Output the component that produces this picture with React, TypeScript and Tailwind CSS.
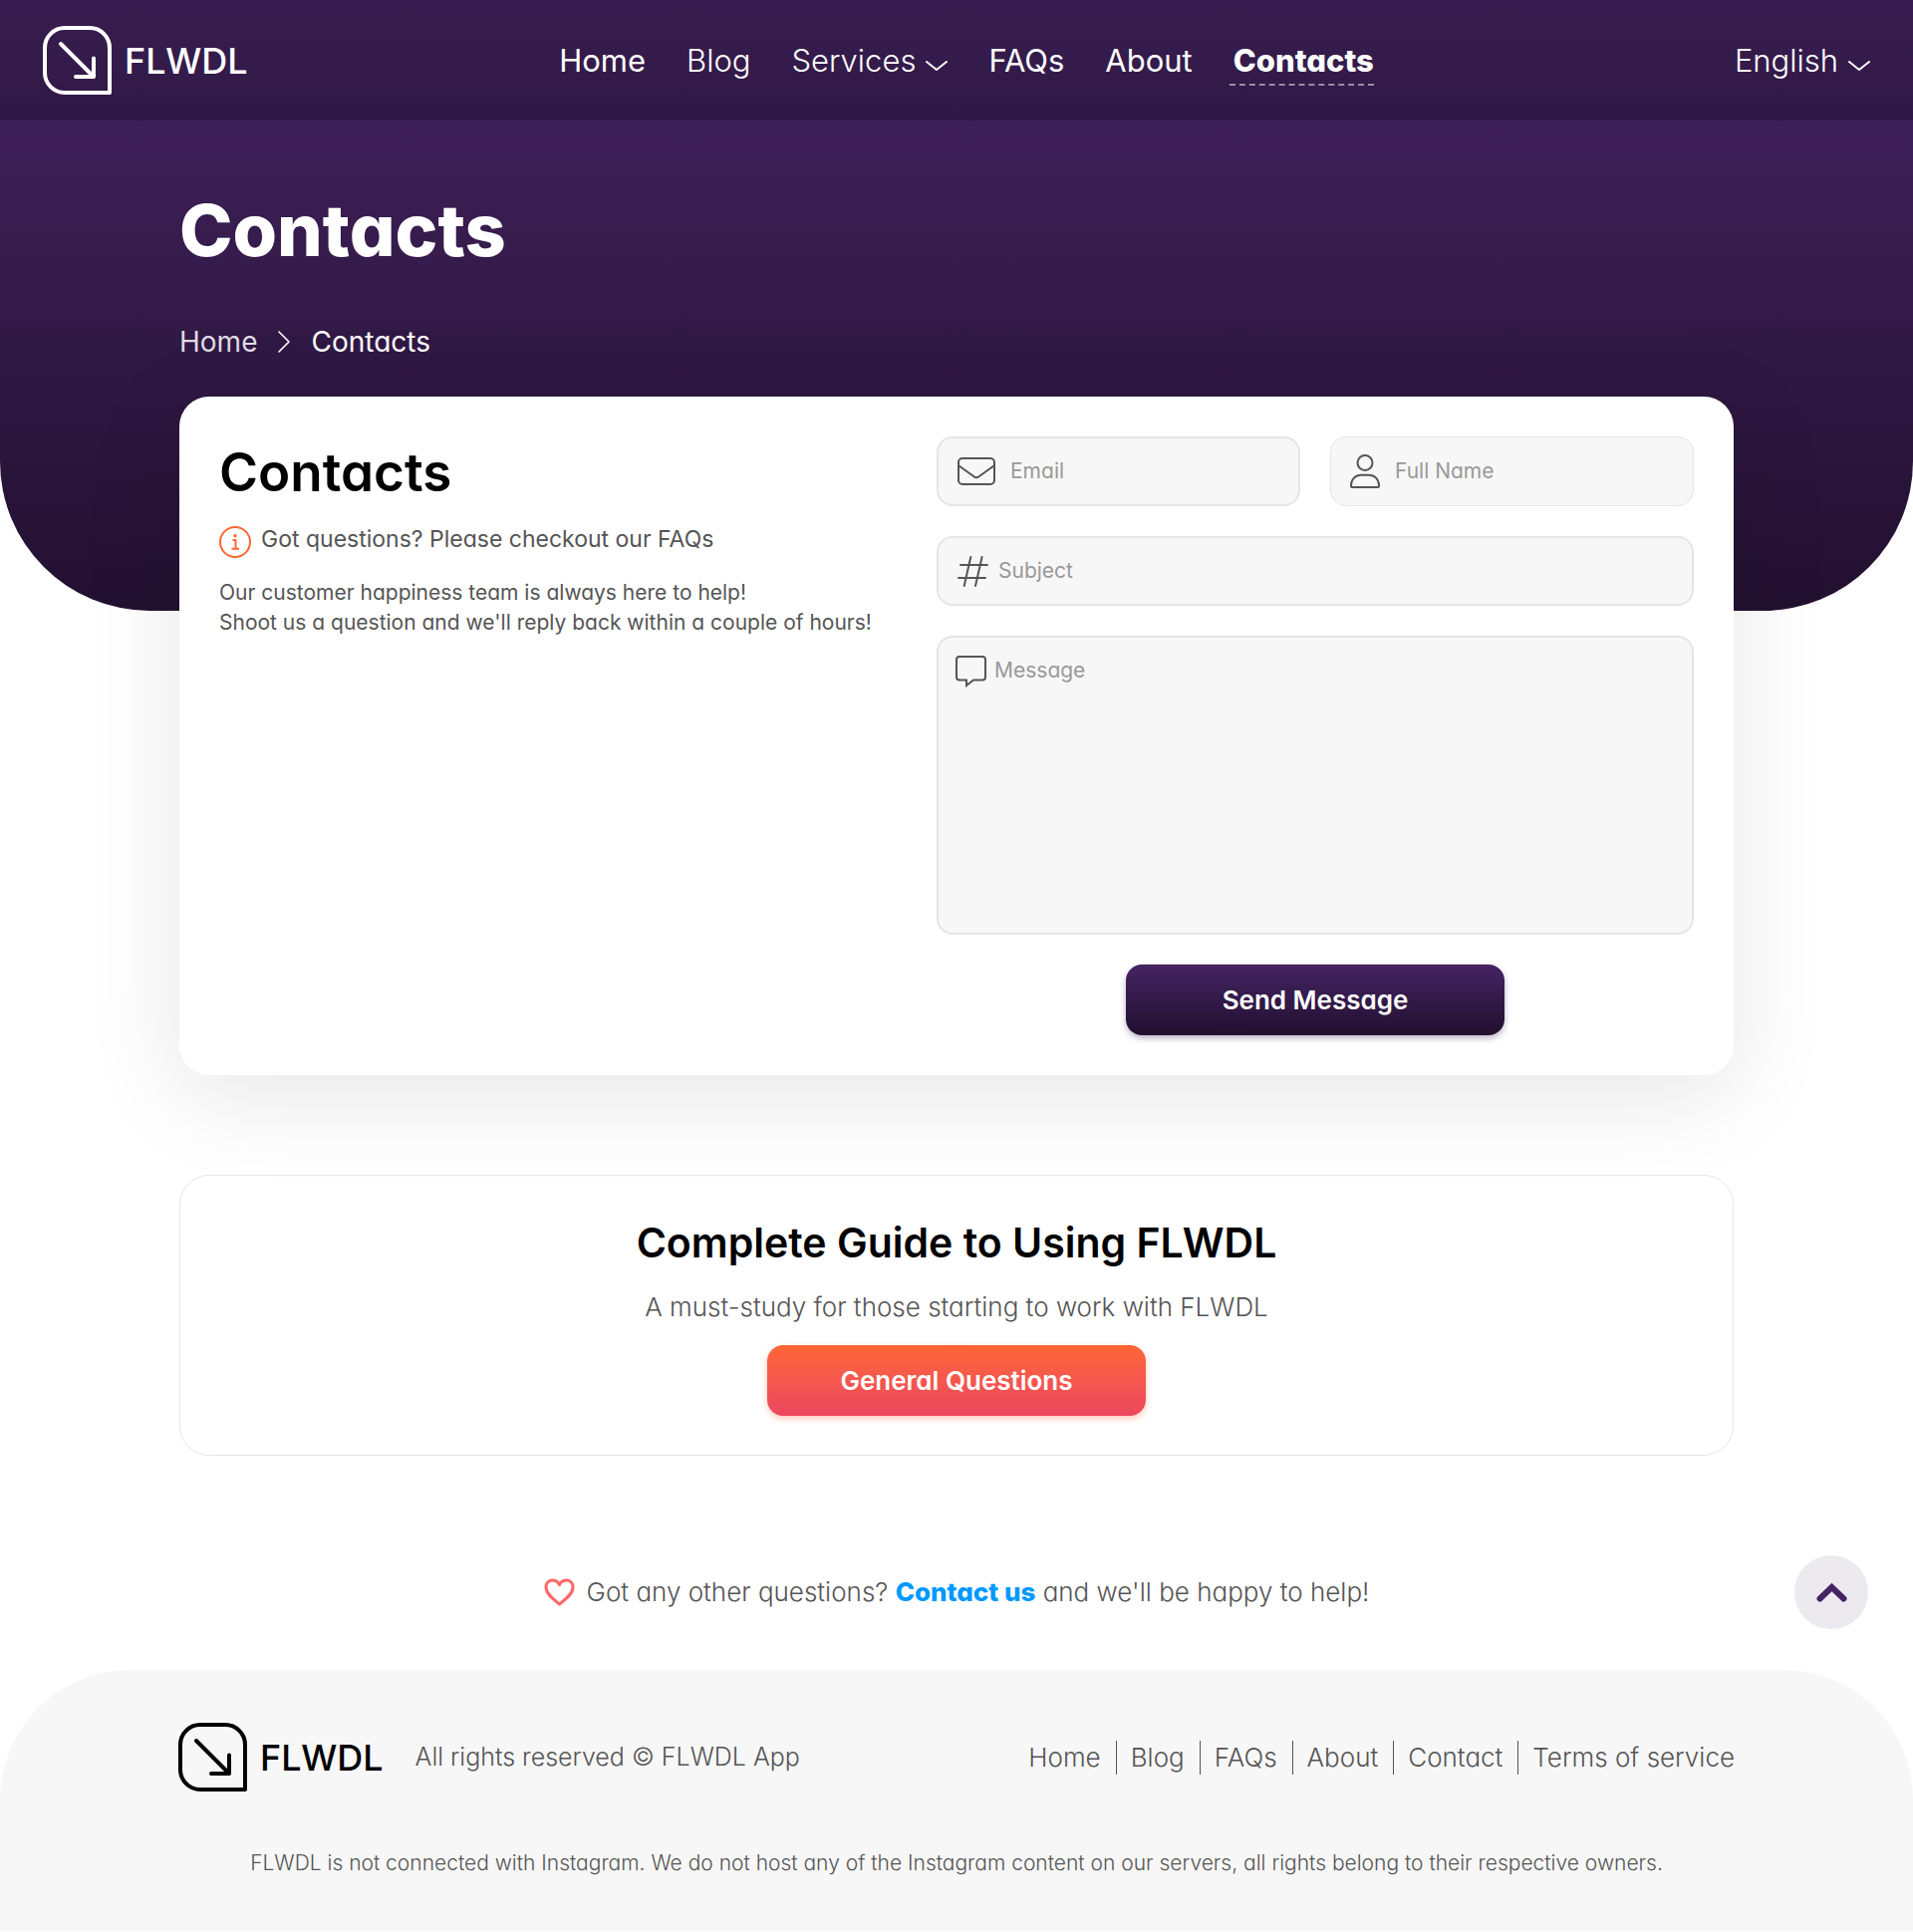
import React from "react";

function Logo({ className }: { className: string }) {
  return (
    <a href="#" className={`flex items-center gap-[13px] text-[36px] font-medium ${className}`}>
      <svg width="69" height="69" viewBox="0 0 69 69" fill="none" stroke="currentColor" strokeWidth="4">
        <path d="M22 2H47A20 20 0 0 1 67 22V67H22A20 20 0 0 1 2 47V22A20 20 0 0 1 22 2Z" strokeLinejoin="round" />
        <path d="M18 18L50.5 50.5M51 32.5V51H33" strokeLinecap="round" strokeLinejoin="round" />
      </svg>
      <span>FLWDL</span>
    </a>
  );
}

function ChevronDown() {
  return (
    <svg className="mt-2.5" width="22" height="10" viewBox="0 0 22 10" fill="none" stroke="currentColor" strokeWidth="2" strokeLinecap="round" strokeLinejoin="round">
      <path d="M1 1L11 9L21 1" />
    </svg>
  );
}

function EnvelopeIcon() {
  return (
    <svg className="shrink-0" width="38" height="28" viewBox="0 0 38 28" fill="none" stroke="currentColor" strokeWidth="2" strokeLinejoin="round">
      <rect x="1" y="1" width="36" height="26" rx="4" />
      <path d="M1.5 8.5L16.5 19.3Q19 21 21.5 19.3L36.5 8.5" />
    </svg>
  );
}

function PersonIcon() {
  return (
    <svg className="shrink-0" width="30" height="34" viewBox="0 0 30 34" fill="none" stroke="currentColor" strokeWidth="2">
      <circle cx="15" cy="8.5" r="7.5" />
      <path d="M1 31C1 25 5.5 20.7 11 20.7H19C24.5 20.7 29 25 29 31V32A1 1 0 0 1 28 33H2A1 1 0 0 1 1 32Z" strokeLinejoin="round" />
    </svg>
  );
}

function HashIcon() {
  return (
    <svg className="shrink-0" width="31" height="31" viewBox="0 0 31 31" fill="none" stroke="currentColor" strokeWidth="2" strokeLinecap="round">
      <path d="M13.3 1L6.7 30M24.6 1L18 30M3 9H30M1 22H28" />
    </svg>
  );
}

function BubbleIcon() {
  return (
    <svg className="shrink-0" width="31" height="32" viewBox="0 0 31 32" fill="none" stroke="currentColor" strokeWidth="2">
      <path d="M4 1H27A3 3 0 0 1 30 4V21.5A3 3 0 0 1 27 24.5H18L11 30V24.5H4A3 3 0 0 1 1 21.5V4A3 3 0 0 1 4 1Z" />
    </svg>
  );
}

const navLink = "flex items-center gap-2.5 leading-[46px]";
const field = "flex items-center rounded-2xl bg-[#f7f7f7] pl-[19px] pr-4 text-[#555] h-[70px] border-[#e5e5e5]";
const textBox = "min-w-0 flex-1 bg-transparent text-[21px] leading-[30px] outline-none placeholder:text-[#999] placeholder:opacity-100";
const bigButton = "h-[71px] w-full max-w-[380px] rounded-2xl text-[26px] font-semibold text-white bg-linear-to-b";

const footerLinks = ["Home", "Blog", "FAQs", "About", "Contact", "Terms of service"];

export default function App() {
  return (
    <div className="bg-white font-[Inter,sans-serif] text-[#555] [font-feature-settings:'cv11']">
      <div className="rounded-b-[150px] bg-linear-to-b from-[#452463] to-[#22102f] pb-[250px]">
        <header className="grid h-[121px] grid-cols-[1fr_auto_1fr] items-center bg-black/20 px-[43px] text-white">
          <Logo className="justify-self-start text-white" />
          <nav className="flex items-center gap-[41px] pl-5 text-[31px]">
            <a href="#" className={navLink}>Home</a>
            <a href="#" className={`${navLink} font-light`}>Blog</a>
            <button type="button" className={`${navLink} font-light`}>
              Services
              <ChevronDown />
            </button>
            <a href="#" className={navLink}>FAQs</a>
            <a href="#" className={navLink}>About</a>
            <a href="#" aria-current="page" className="-ml-1 border-y-2 border-dashed border-t-transparent border-b-white/50 pl-1 leading-[46px] font-extrabold">
              Contacts
            </a>
          </nav>
          <button type="button" className={`${navLink} justify-self-end text-[31px] font-light`}>
            English
            <ChevronDown />
          </button>
        </header>

        <div className="mx-auto w-full max-w-[1560px] pt-[65px] text-white">
          <h1 className="text-[72px] leading-[90px] font-extrabold">Contacts</h1>
          <nav aria-label="Breadcrumb" className="mt-[47px] flex items-center gap-[21px] text-[28px] leading-10">
            <a href="#" className="text-[#dedbe2]">Home</a>
            <svg width="12" height="22" viewBox="0 0 12 22" fill="none" stroke="currentColor" strokeWidth="1.6" strokeLinecap="round" strokeLinejoin="round">
              <path d="M1 1L11 11L1 21" />
            </svg>
            <span aria-current="page">Contacts</span>
          </nav>
        </div>
      </div>

      <main className="mx-auto -mt-[215px] w-full max-w-[1560px]">
        <section className="grid grid-cols-[18fr_19fr] rounded-[30px] bg-white p-10 shadow-[0_20px_100px_rgba(0,0,0,0.1)]">
          <div>
            <h2 className="text-[53px] leading-[72px] font-semibold text-black">Contacts</h2>
            <div className="mt-4 flex h-[34px] items-end gap-2.5">
              <svg width="32" height="32" viewBox="0 0 32 32" fill="none" stroke="#ff6633" strokeWidth="2">
                <circle cx="16" cy="16" r="15" />
                <path d="M13.5 14H16.5V22.5M12.5 22.7H20" strokeLinejoin="round" />
                <circle cx="16" cy="9.7" r="1.7" fill="#ff6633" stroke="none" />
              </svg>
              <p className="self-start text-[23px] leading-[30px]">Got questions? Please checkout our FAQs</p>
            </div>
            <p className="mt-5 text-[21px] leading-[30px]">
              Our customer happiness team is always here to help!
              <br />
              Shoot us a question and we'll reply back within a couple of hours!
            </p>
          </div>

          <form className="flex flex-col gap-[30px]" onSubmit={(e) => e.preventDefault()}>
            <div className="grid grid-cols-2 gap-[30px]">
              <label className={`${field} gap-[15px] border-2`}>
                <EnvelopeIcon />
                <input type="email" aria-label="Email" placeholder="Email" className={textBox} />
              </label>
              <label className={`${field} gap-[15px] border`}>
                <PersonIcon />
                <input type="text" aria-label="Full Name" placeholder="Full Name" className={textBox} />
              </label>
            </div>
            <label className={`${field} gap-2.5 border-2`}>
              <HashIcon />
              <input type="text" aria-label="Subject" placeholder="Subject" className={textBox} />
            </label>
            <label className="flex h-[300px] items-start gap-2 rounded-2xl border-2 border-[#e5e5e5] bg-[#f7f7f7] pt-[18px] pr-4 pl-[17px] text-[#555]">
              <BubbleIcon />
              <textarea aria-label="Message" placeholder="Message" className={`${textBox} h-[260px] resize-none`} />
            </label>
            <button type="submit" className={`${bigButton} self-center from-[#452463] to-[#22102f] shadow-[0_3px_6px_rgba(69,36,99,0.35)]`}>
              Send Message
            </button>
          </form>
        </section>

        <section className="mt-[100px] flex flex-col items-center rounded-[30px] border border-[#e5e5e5] pt-[37px] pb-[39px]">
          <h2 className="text-[41px] leading-[60px] font-semibold text-black">Complete Guide to Using FLWDL</h2>
          <p className="mt-4 text-[26px] leading-[38px] font-light">A must-study for those starting to work with FLWDL</p>
          <button type="button" className={`${bigButton} mt-[19px] from-[#ff6633] to-[#ec465f] shadow-[0_3px_6px_rgba(255,102,51,0.35)]`}>
            General Questions
          </button>
        </section>
      </main>

      <div className="relative mt-[100px] flex h-[74px] items-center justify-center gap-3">
        <svg width="31" height="28" viewBox="0 0 31 28" fill="none" stroke="#ff6666" strokeWidth="3" strokeLinejoin="round">
          <path d="M15.5 26C10 21.5 2 16 2 9C2 4.5 5 2 8.5 2C11.5 2 14 3.5 15.5 6.5C17 3.5 19.5 2 22.5 2C26 2 29 4.5 29 9C29 16 21 21.5 15.5 26Z" />
        </svg>
        <p className="text-[26px] leading-10 font-light">
          Got any other questions? <a href="#" className="font-extrabold text-[#0099ff]">Contact us</a> and we'll be happy to help!
        </p>
        <button type="button" aria-label="Back to top" className="absolute top-0 right-[45px] flex size-[74px] items-center justify-center rounded-full bg-[#ece9ef]">
          <svg width="31" height="20" viewBox="0 0 31 20" fill="none" stroke="#452463" strokeWidth="6" strokeLinecap="round" strokeLinejoin="miter">
            <path d="M3.5 16.5L15.5 5L27.5 16.5" />
          </svg>
        </button>
      </div>

      <footer className="mt-[41px] rounded-t-[130px] bg-[#f7f7f7] pt-[53px] pb-[53px]">
        <div className="mx-auto flex w-full max-w-[1562px] items-center justify-between">
          <div className="flex items-center gap-8">
            <Logo className="text-black" />
            <p className="text-[25px] font-light">All rights reserved © FLWDL App</p>
          </div>
          <nav aria-label="Footer" className="flex items-center text-[26px] leading-[34px] font-light">
            {footerLinks.map((label) => (
              <a key={label} href="#" className="border-r border-[#555] pr-[15px] pl-[14px] last:border-r-0 last:pr-0">
                {label}
              </a>
            ))}
          </nav>
        </div>
        <p className="mt-[57px] text-center text-[21px] leading-[30px] font-light">
          FLWDL is not connected with Instagram. We do not host any of the Instagram content on our servers, all rights belong to their respective owners.
        </p>
      </footer>
    </div>
  );
}
